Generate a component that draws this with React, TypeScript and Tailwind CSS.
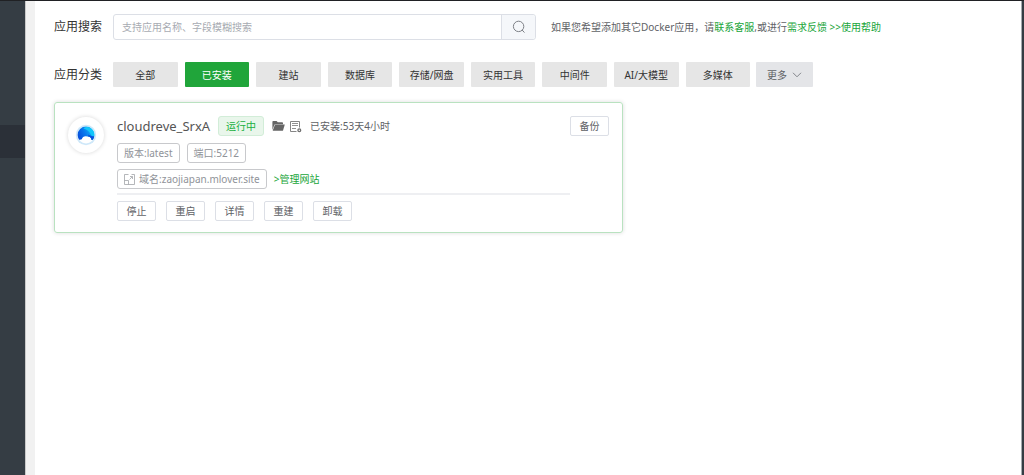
import type { ReactNode } from "react";

const categories = ["全部", "已安装", "建站", "数据库", "存储/网盘", "实用工具", "中间件", "AI/大模型", "多媒体"];
const actions = ["停止", "重启", "详情", "重建", "卸载"];

function SmallButton({ children }: { children: ReactNode }) {
  return (
    <button
      type="button"
      className="h-5 w-[39px] shrink-0 rounded-xs border border-[#dcdfe6] bg-white text-center leading-[18px] text-[#606266]"
    >
      {children}
    </button>
  );
}

function Tag({ children }: { children: ReactNode }) {
  return (
    <span className="flex h-5 items-center rounded-[3px] border border-[#c8c9cc] px-[6px] text-[#909399]">
      {children}
    </span>
  );
}

function SearchIcon() {
  return (
    <svg viewBox="0 0 14 14" className="size-[14px]" fill="none" stroke="#7d8086" strokeWidth="1">
      <circle cx="6.6" cy="6.4" r="5.2" />
      <path d="M10.3 10.2 12.2 12.3" strokeLinecap="round" />
    </svg>
  );
}

function AppLogo() {
  return (
    <svg viewBox="0 0 22 22" className="size-[22px]">
      <defs>
        <linearGradient id="cap" x1="0" y1="0.7" x2="1" y2="0.3">
          <stop offset="0" stopColor="#0648d8" />
          <stop offset="0.45" stopColor="#0878ee" />
          <stop offset="1" stopColor="#10c8fa" />
        </linearGradient>
        <clipPath id="disc">
          <circle cx="11" cy="11" r="8.4" />
        </clipPath>
      </defs>
      <circle cx="11" cy="11" r="10.2" fill="#cfe8f9" />
      <circle cx="11" cy="11" r="8.4" fill="#fff" />
      <g clipPath="url(#disc)">
        <path d="M2 2H20V15.8L16.6 16C16.4 13.6 14.4 12.2 12 12.6 9.6 11.8 7.4 13 6.8 15.2L2 16.6Z" fill="url(#cap)" />
        <path d="M8.5 4.5C12 1.5 19 3 20 12 18.6 12.6 17 12 16.2 11 14.6 7.6 12 5.4 8.5 4.5Z" fill="#12c6fa" />
        <path d="M13.5 10.5C16 12.5 18 12.4 20 12V15.8L16.6 16C16.2 13.8 15 12.8 13 12.5Z" fill="#0a52dc" />
      </g>
    </svg>
  );
}

function FolderIcon() {
  return (
    <svg viewBox="0 0 13 12" className="h-3 w-[13px]" fill="#666">
      <path d="M.4 10V1.8Q.4 1 1.2 1H4.6L5.8 2.2H10.2Q11 2.2 11 3V4.2H3.3Q2.7 4.2 2.4 4.8Z" />
      <path d="M3 4.6H12.8L11.1 10.2Q10.9 10.8 10.3 10.8H.7Z" />
    </svg>
  );
}

function LogIcon() {
  return (
    <svg viewBox="0 0 13 13" className="size-[13px]" fill="none" stroke="#858585" strokeWidth="1">
      <path d="M7.5 11.5H1.5V1.5H10.5V7.5" />
      <path d="M3 3.5H9M3 5.5H9M3 8.5H7" strokeWidth="0.9" />
      <circle cx="10.3" cy="10.2" r="1.4" stroke="#707070" strokeWidth="1.3" />
    </svg>
  );
}

function DomainIcon() {
  return (
    <svg viewBox="0 0 11 11" className="mr-1 size-[11px]" fill="none" stroke="#a2a4a8" strokeWidth="0.8">
      <path d="M4.5.5H.5V10.5H10.5V.5H7.5M.5 6.5H4.5V10.5M5.5 5.5 8.3 2.7M6 2.5H8.5V5" />
    </svg>
  );
}

export default function App() {
  return (
    <div className="flex min-h-screen border-t border-[#202124] bg-white font-['Noto_Sans','Noto_Sans_CJK_SC',sans-serif] text-[10px] leading-4 text-[#606266]">
      <aside className="w-[25px] shrink-0 bg-[#353d44] pt-[124px]">
        <div className="h-[33px] bg-[#2b3038]" />
      </aside>
      <div className="w-[10px] shrink-0 border-l border-[#c9c9c9] bg-[#f1f1f1]" />

      <main className="min-w-0 flex-1 pt-[13px] pr-5 pl-[19px]">
        <div className="flex items-center">
          <label htmlFor="search" className="w-[59px] shrink-0 text-xs text-[#333]">
            应用搜索
          </label>
          <form className="flex h-[26px] w-[423px] rounded-[3px] border border-[#dcdfe6]">
            <input
              id="search"
              type="text"
              placeholder="支持应用名称、字段模糊搜索"
              className="min-w-0 flex-1 rounded-l-[3px] px-2 outline-none placeholder:text-[#a8abb2]"
            />
            <button
              type="button"
              aria-label="搜索"
              className="flex w-[34px] items-center justify-center rounded-r-[3px] border-l border-[#dcdfe6] bg-[#f5f7fa]"
            >
              <SearchIcon />
            </button>
          </form>
          <p className="ml-[15px] whitespace-nowrap">
            如果您希望添加其它Docker应用，请
            <a href="#service" className="text-[#20a53a]">联系客服</a>
            ,或进行
            <a href="#feedback" className="text-[#20a53a]">需求反馈</a>{" "}
            <a href="#help" className="text-[#20a53a]">&gt;&gt;使用帮助</a>
          </p>
        </div>

        <div className="mt-[22px] flex items-center">
          <span className="w-[59px] shrink-0 text-xs text-[#333]">应用分类</span>
          <div className="flex w-[637px] gap-[7px]">
            {categories.map((name) => (
              <button
                key={name}
                type="button"
                className={
                  name === "已安装"
                    ? "h-[25px] flex-1 basis-0 rounded-[1px] bg-[#20a53a] whitespace-nowrap text-white"
                    : "h-[25px] flex-1 basis-0 rounded-[1px] bg-[#e6e6e6] whitespace-nowrap text-[#333]"
                }
              >
                {name}
              </button>
            ))}
          </div>
          <button
            type="button"
            className="ml-[6px] flex h-[25px] w-[57px] items-center justify-center gap-[5px] rounded-[1px] bg-[#e4e5e8] text-[#606266]"
          >
            更多
            <svg viewBox="0 0 10 6" className="h-[6px] w-[10px]" fill="none" stroke="#777a80" strokeWidth="0.9">
              <path d="M1 .8 5 4.8 9 .8" />
            </svg>
          </button>
        </div>

        <section className="mt-[15px] flex w-[569px] rounded-[3px] border border-[#b9e2c0] pt-[13px] pr-[13px] pb-[11px] pl-[13px] shadow-[0_0_4px_rgba(0,0,0,0.14)]">
          <div className="mt-px flex size-9 shrink-0 items-center justify-center rounded-full bg-white shadow-[0_0_4px_rgba(0,0,0,0.16)]">
            <AppLogo />
          </div>
          <div className="ml-[13px] min-w-0 flex-1">
            <div className="flex h-5 items-center">
              <h2 className="text-[13px] text-[#555]">cloudreve_SrxA</h2>
              <span className="ml-2 flex h-5 items-center rounded-[3px] border border-[#d2edd8] bg-[#e9f6eb] px-[7px] text-[#20b040]">
                运行中
              </span>
              <button type="button" aria-label="打开目录" className="ml-2">
                <FolderIcon />
              </button>
              <button type="button" aria-label="日志" className="ml-1">
                <LogIcon />
              </button>
              <span className="ml-2">已安装:53天4小时</span>
            </div>
            <div className="mt-[7px] flex gap-[7px]">
              <Tag>版本:latest</Tag>
              <Tag>端口:5212</Tag>
            </div>
            <div className="mt-[6px] flex items-center gap-[7px]">
              <Tag>
                <DomainIcon />
                域名:zaojiapan.mlover.site
              </Tag>
              <a href="#site" className="text-[#20a53a]">&gt;管理网站</a>
            </div>
            <div className="mt-1 flex gap-[10px] border-t-2 border-[#eeeff2] pt-[6px]">
              {actions.map((name) => (
                <SmallButton key={name}>{name}</SmallButton>
              ))}
            </div>
          </div>
          <SmallButton>备份</SmallButton>
        </section>
      </main>
      <div className="w-[3px] shrink-0 border-l border-[#a5abb0] bg-[#353d44]" />
    </div>
  );
}
